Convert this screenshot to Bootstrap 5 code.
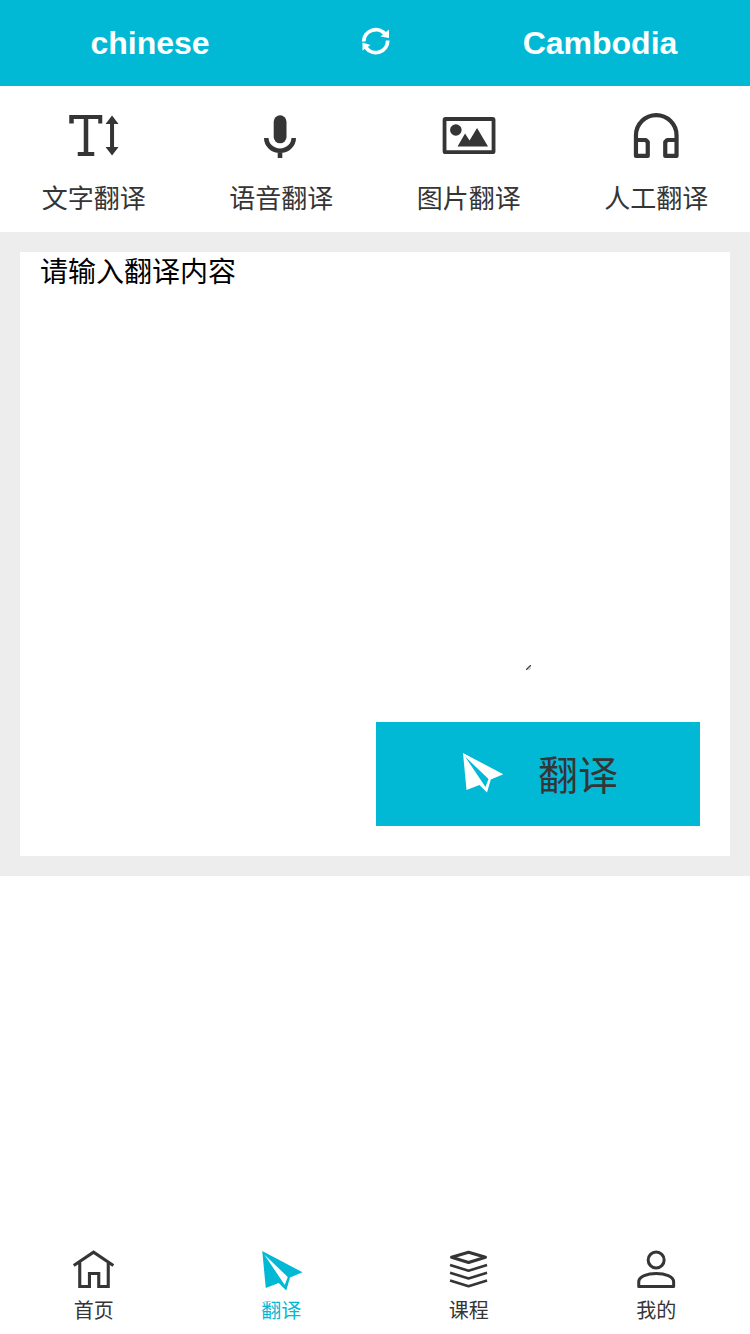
<!DOCTYPE html>
<html lang="zh-CN">
<head>
<meta charset="utf-8">
<meta name="viewport" content="width=device-width, initial-scale=1">
<title>翻译</title>
<link href="https://cdn.jsdelivr.net/npm/bootstrap@5.3.0/dist/css/bootstrap.min.css" rel="stylesheet">
<style>
  body { font-family: "Liberation Sans", "Noto Sans CJK SC", sans-serif; color: #353535; line-height: 1.5; }
  .topbar { height: 86px; background: #02b9d5; font-size: 32px; font-weight: 700; }
  .topbar svg { margin-bottom: 4px; }
  .lang { width: 300px; }
  .modes { height: 146px; font-size: 26px; }
  .modes svg { display: block; width: 60px; height: 60px; margin-top: 20px; }
  .mode-label { line-height: 38px; margin-top: 14px; }
  .panel { background: #ededed; padding: 20px; height: 644px; }
  .source-box { width: 512px; height: 419px; }
  .source { padding: 2px 20px 0; font-size: 28px; line-height: 38px; color: #000; resize: none; outline: 0; display: block; }
  .source::placeholder { color: #000; opacity: 1; }
  .grip { right: 1px; bottom: 1px; }
  .go { width: 324px; height: 104px; background: #02b9d5; color: #353535; font-size: 40px; margin: 0 30px 30px auto; }
  .go svg { margin: 0 0 2px 3px; }
  .go-label { margin-left: 33px; padding-top: 4px; }
  .tabs { height: 94px; font-size: 20px; }
  .tabs svg { display: block; width: 50px; height: 50px; margin-top: 5px; }
  .tab-label { line-height: 30px; margin-top: 1px; }
  .active-tab { color: #02b9d5; }
</style>
</head>
<body class="bg-white">
<div class="d-flex flex-column vh-100 overflow-hidden">
  <header class="topbar d-flex align-items-center text-white text-center">
    <div class="lang">chinese</div>
    <div class="flex-fill d-flex justify-content-center">
      <svg width="40" height="40" viewBox="355 23 40 40" fill="none" stroke="#fff" stroke-width="3.8">
        <path d="M363.700 43.500A12 12 0 0 1 385.500 36.800M387.700 42.500A12 12 0 0 1 366 49.600"/>
        <path d="M389 31v8.500l-8.500-1.500zM362.500 44v8l8-5.500z" transform="translate(0 .5)" fill="#fff" stroke="none"/>
      </svg>
    </div>
    <div class="lang">Cambodia</div>
  </header>

  <nav class="modes row g-0 text-center">
    <div class="col d-flex flex-column align-items-center">
      <svg viewBox="63.75 106 60 60" fill="#353535"><path d="M69 115h33v8.500h-4v-4.500h-10v33h6v4h-16.500v-4h6v-33h-10v4.500H69zM111.800 115.500l6.500 8.500h-4.500v23h4.500l-6.500 8.500-6.500-8.500h4.500v-23h-4.500z"/></svg>
      <div class="mode-label">文字翻译</div>
    </div>
    <div class="col d-flex flex-column align-items-center">
      <svg viewBox="251 106 60 60" fill="#353535"><rect x="273.700" y="115.300" width="12.800" height="28" rx="6.400"/><path d="M266.300 138a13.700 12.800 0 0 0 27.400 0M280 151v7" fill="none" stroke="#353535" stroke-width="4.600"/></svg>
      <div class="mode-label">语音翻译</div>
    </div>
    <div class="col d-flex flex-column align-items-center">
      <svg viewBox="438.95 106 60 60" fill="#353535"><rect x="444.500" y="119" width="49" height="33.200" rx="1" fill="none" stroke="#353535" stroke-width="3.800"/><circle cx="455.800" cy="130" r="5.800"/><path d="M457.500 146.500l7.500-13 4.500 7 7.500-12.500 11 18.500z"/></svg>
      <div class="mode-label">图片翻译</div>
    </div>
    <div class="col d-flex flex-column align-items-center">
      <svg viewBox="626.05 106 60 60" fill="none" stroke="#353535" stroke-width="4.200" stroke-linejoin="round"><path d="M636 155.900v-20.500a20.300 20.300 0 0 1 40.600 0V155.900h-11.300v-13.900l2-2h9.300M636 140h9.800l2 2v13.900H636z"/></svg>
      <div class="mode-label">人工翻译</div>
    </div>
  </nav>

  <main class="panel">
    <div class="bg-white h-100 d-flex flex-column justify-content-between">
      <div class="source-box position-relative">
        <textarea class="source w-100 h-100 border-0 bg-white" placeholder="请输入翻译内容"></textarea>
        <svg class="grip position-absolute" width="5" height="5" viewBox="0 0 5 5" fill="none"><path d="M0 5l5-5" stroke="#444" stroke-width="1.300"/><path d="M2.500 5L5 2.500" stroke="#aaa"/></svg>
      </div>
      <button type="button" class="go btn rounded-0 border-0 p-0 d-flex align-items-center justify-content-center">
        <svg width="44" height="44" viewBox="461 751 44 44" fill="#fff"><path fill-rule="evenodd" d="M463 753l40.300 21.300-12.500 5.200-3.800 13-7.500-7.500-13 5zM465 756.500l20.500 30.500 3-8z"/></svg>
        <span class="go-label">翻译</span>
      </button>
    </div>
  </main>

  <footer class="tabs row g-0 text-center mt-auto">
    <div class="col d-flex flex-column align-items-center">
      <svg viewBox="68.75 1245 50 50" fill="none" stroke="#353535" stroke-width="3.100"><path d="M73.500 1265.500l19.800-13.300 19.800 13.300M79.500 1262.500v24h9.700v-13h9.300v13h9.500v-24"/></svg>
      <div class="tab-label">首页</div>
    </div>
    <div class="col d-flex flex-column align-items-center active-tab">
      <svg viewBox="256.05 1245 50 50" fill="currentColor"><path fill-rule="evenodd" d="M262.300 1251l40.300 21.300-12.500 5.200-3.800 13-7.500-7.500-13 5zM264.300 1254.500l20.500 30.500 3-8z"/></svg>
      <div class="tab-label">翻译</div>
    </div>
    <div class="col d-flex flex-column align-items-center">
      <svg viewBox="443.95 1245 50 50" fill="none" stroke="#353535" stroke-width="2.500" stroke-linejoin="round"><path d="M451.500 1257.200l17-5 17 5-17 5.300z" stroke-width="3"/><path d="M450 1265l18.500 5.700 18.500-5.700M450 1272.800l18.500 5.700 18.500-5.700M450 1280.500l18.500 5.700 18.500-5.700"/></svg>
      <div class="tab-label">课程</div>
    </div>
    <div class="col d-flex flex-column align-items-center">
      <svg viewBox="631.05 1245 50 50" fill="none" stroke="#353535" stroke-width="3"><circle cx="656.200" cy="1260" r="8"/><path d="M638.800 1286.500v-4.500c0-11.300 34.900-11.300 34.900 0v4.500z" stroke-linejoin="round"/></svg>
      <div class="tab-label">我的</div>
    </div>
  </footer>
</div>
<script src="https://cdn.jsdelivr.net/npm/bootstrap@5.3.0/dist/js/bootstrap.bundle.min.js"></script>
</body>
</html>
